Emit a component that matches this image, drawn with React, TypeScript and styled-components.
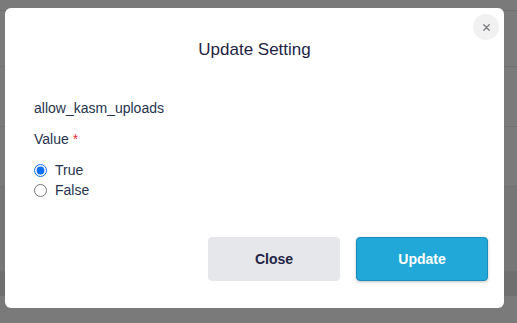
import React from "react";
import styled, { createGlobalStyle } from "styled-components";

const Global = createGlobalStyle`
  html, body { margin: 0; padding: 0; }
  body {
    width: 517px; height: 323px; overflow: hidden;
    background: #f4f4f4;
    font-family: "Liberation Sans", Arial, sans-serif;
  }
`;

const Page = styled.div`
  display: flex;
  flex-direction: column;
  width: 517px;
  height: 323px;
  background: #f4f4f4;
`;

const BgRow = styled.div<{ $h: number; $bg?: string }>`
  height: ${(p) => p.$h}px;
  flex: none;
  background: ${(p) => p.$bg || "#f4f4f4"};
  border-bottom: 1px solid #e0e0e0;
`;

const Overlay = styled.div`
  position: fixed;
  inset: 0;
  background: rgba(0, 0, 0, 0.5);
`;

const Modal = styled.div`
  position: fixed;
  left: 5px;
  top: 8px;
  width: 499px;
  height: 300px;
  box-sizing: border-box;
  background: #fff;
  border-radius: 6px;
  display: flex;
  flex-direction: column;
  padding: 30px 16px 0 29px;
`;

const CloseX = styled.button`
  position: absolute;
  top: 6px;
  right: 5px;
  width: 26px;
  height: 26px;
  border-radius: 50%;
  border: none;
  background: #f1f1f2;
  display: flex;
  align-items: center;
  justify-content: center;
  padding: 0;
  cursor: pointer;
`;

const Title = styled.h2`
  margin: 0 0 0 -13px;
  font-size: 17px;
  line-height: 24px;
  font-weight: 400;
  color: #1f2446;
  text-align: center;
`;

const Body = styled.div`
  margin-top: 36px;
  display: flex;
  flex-direction: column;
`;

const Text = styled.div<{ $mt?: number }>`
  font-size: 14px;
  line-height: 20px;
  color: #27334d;
  margin-top: ${(p) => p.$mt || 0}px;
`;

const Req = styled.span`
  color: #e5303a;
`;

const RadioGroup = styled.div`
  margin-top: 11px;
  display: flex;
  flex-direction: column;
`;

const RadioLabel = styled.label`
  display: flex;
  align-items: center;
  height: 20px;
  font-size: 14px;
  color: #27334d;
  gap: 8px;
`;

const Radio = styled.input`
  margin: 0;
  width: 13px;
  height: 13px;
  accent-color: #0b6ef5;
`;

const Footer = styled.div`
  margin-top: 37px;
  display: flex;
  justify-content: flex-end;
  gap: 16px;
`;

const Btn = styled.button<{ $primary?: boolean }>`
  width: 132px;
  height: 44px;
  box-sizing: border-box;
  border-radius: 4px;
  font-family: "Liberation Sans", Arial, sans-serif;
  font-weight: 700;
  font-size: 14px;
  cursor: pointer;
  border: 1px solid ${(p) => (p.$primary ? "#1b8dbd" : "#e6e7eb")};
  background: ${(p) => (p.$primary ? "#21a8d9" : "#e6e7eb")};
  color: ${(p) => (p.$primary ? "#ffffff" : "#1f2446")};
  box-shadow: ${(p) => (p.$primary ? "0 1px 3px rgba(0,0,0,0.25)" : "none")};
`;

export default function App() {
  return (
    <>
      <Global />
      <Page>
        <BgRow $h={10} />
        <BgRow $h={55} />
        <BgRow $h={59} />
        <BgRow $h={59} />
        <BgRow $h={84} $bg="#ececec" />
        <BgRow $h={23} $bg="#dedede" />
        <BgRow $h={30} />
      </Page>
      <Overlay />
      <Modal role="dialog">
        <CloseX aria-label="Close">
          <svg width="7" height="7" viewBox="0 0 7 7">
            <path d="M0.8 0.8L6.2 6.2M6.2 0.8L0.8 6.2" stroke="#7a7a7e" strokeWidth="1.3" strokeLinecap="round" />
          </svg>
        </CloseX>
        <Title>Update Setting</Title>
        <Body>
          <Text>allow_kasm_uploads</Text>
          <Text $mt={11}>
            Value <Req>*</Req>
          </Text>
          <RadioGroup>
            <RadioLabel>
              <Radio type="radio" name="v" defaultChecked />
              True
            </RadioLabel>
            <RadioLabel>
              <Radio type="radio" name="v" />
              False
            </RadioLabel>
          </RadioGroup>
        </Body>
        <Footer>
          <Btn>Close</Btn>
          <Btn $primary>Update</Btn>
        </Footer>
      </Modal>
    </>
  );
}
